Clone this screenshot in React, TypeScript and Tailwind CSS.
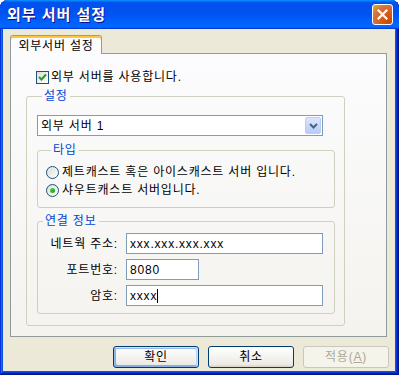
import React from "react";

type Props = { children?: React.ReactNode; className?: string };

const Legend: React.FC<{ text: string }> = ({ text }) => (
  <legend className="ml-[5px] px-[2px] leading-[12px] text-[#0046d5]">{text}</legend>
);

const Checkbox: React.FC = () => (
  <div className="w-[13px] h-[13px] border border-[#1c5180] bg-[linear-gradient(135deg,#dcdcd7,#ffffff)] flex items-center justify-center">
    <svg width="9" height="9" viewBox="0 0 9 9">
      <path d="M1 4 L3.5 6.5 L8 1.5" fill="none" stroke="#21a121" strokeWidth="2" />
    </svg>
  </div>
);

const Radio: React.FC<{ checked?: boolean }> = ({ checked }) => (
  <div className="w-[13px] h-[13px] rounded-full border border-[#1c5180] bg-[linear-gradient(135deg,#dcdcd7,#ffffff)] flex items-center justify-center">
    {checked && <div className="w-[5px] h-[5px] rounded-full bg-[linear-gradient(135deg,#55d551,#09a409)]" />}
  </div>
);

const Field: React.FC<Props & { width: string }> = ({ children, width }) => (
  <div className={`${width} h-[21px] border border-[#7f9db9] bg-white flex items-center pl-[3px] leading-[14px]`}>
    {children}
  </div>
);

const Button: React.FC<Props & { primary?: boolean; disabled?: boolean }> = ({ children, primary, disabled }) => {
  if (disabled) {
    return (
      <div className="w-[86px] h-[22px] rounded-[3px] border border-[#cac8bb] bg-[#f5f4ea] text-[#aca899] flex items-center justify-center">
        {children}
      </div>
    );
  }
  return (
    <div
      className={`w-[86px] h-[22px] rounded-[3px] border border-[#003c74] bg-[linear-gradient(180deg,#ffffff,#ecebe5_86%,#d8d0c4)] flex items-center justify-center ${
        primary
          ? "shadow-[inset_-1px_1px_#cee7ff,inset_1px_2px_#98b8ea,inset_-2px_2px_#bcd4f6,inset_1px_-1px_#89ade4,inset_2px_-2px_#89ade4]"
          : ""
      }`}
    >
      {children}
    </div>
  );
};

export default function App() {
  return (
    <div className="w-[399px] h-[375px] flex flex-col rounded-t-[8px] overflow-hidden bg-[#0855dd] shadow-[inset_-1px_-1px_#00138c,inset_1px_1px_#0831d9,inset_-2px_-2px_#001ea0,inset_2px_2px_#166aee,inset_-3px_-3px_#003bda,inset_3px_3px_#0855dd] font-['Liberation_Sans','Noto_Sans_CJK_KR',sans-serif] text-[12px] tracking-[0.8px] text-black">
      {/* title bar */}
      <div className="h-[29px] shrink-0 flex items-center justify-between pl-[7px] pr-[6px] bg-[linear-gradient(180deg,#0997ff,#0053ee_8%,#0050ee_40%,#0066ff_88%,#0066ff_93%,#005bff_95%,#003dd7_96%,#003dd7)]">
        <span className="text-white font-bold text-[15px] tracking-[1px] leading-[18px] [text-shadow:1px_1px_#0f1089]">
          외부 서버 설정
        </span>
        <div className="w-[21px] h-[21px] rounded-[3px] border border-white bg-[radial-gradient(circle_at_90%_90%,#cc4600,#dc6527_55%,#cd7546_70%,#e5a01a_90%)] flex items-center justify-center">
          <svg width="11" height="11" viewBox="0 0 11 11">
            <path d="M1.5 1.5 L9.5 9.5 M9.5 1.5 L1.5 9.5" stroke="white" strokeWidth="2.2" strokeLinecap="square" />
          </svg>
        </div>
      </div>

      {/* body */}
      <div className="flex-1 ml-[3px] mr-[4px] mb-[4px] bg-[#ece9d8] flex flex-col pt-[6px] pl-[7px] pr-[8px] pb-[3px]">
        <div className="flex">
          <div className="relative z-10 -mb-[1px] w-[92px] h-[19px] rounded-t-[3px] border-x border-t border-x-[#919b9c] border-t-[#e68b2c] bg-[#fcfcfe] shadow-[inset_0_2px_#ffc83c] flex items-center justify-center pt-[2px] leading-[12px]">
            외부서버 설정
          </div>
        </div>

        <div className="h-[284px] border border-[#919b9c] bg-[linear-gradient(180deg,#fcfcfe,#f4f3ee)] pt-[17px] pl-[15px]">
          <div className="flex items-center h-[13px] ml-[10px] gap-[2px] leading-[13px]">
            <Checkbox />
            <span>외부 서버를 사용합니다.</span>
          </div>

          <fieldset className="mt-[6px] w-[319px] border border-[#d0d0bf] rounded-[3px] pl-[10px] pr-[9px] pt-[13px] pb-[11px]">
            <Legend text="설정" />
            <div className="w-[286px] h-[21px] border border-[#7f9db9] bg-white flex items-center justify-between pl-[3px] pr-[1px] leading-[14px]">
              <span>외부 서버 1</span>
              <div className="w-[16px] h-[17px] rounded-[2px] border border-[#bacefa] bg-[linear-gradient(180deg,#dbe6fd,#b7cbfa)] flex items-center justify-center">
                <svg width="9" height="6" viewBox="0 0 9 6">
                  <path d="M1 1 L4.5 4.5 L8 1" fill="none" stroke="#4d6185" strokeWidth="2" />
                </svg>
              </div>
            </div>

            <fieldset className="mt-[8px] w-[298px] border border-[#d0d0bf] rounded-[3px] pl-[8px] pt-[10px] pb-[10px] flex flex-col gap-[5px]">
              <Legend text="타입" />
              <div className="flex items-center h-[13px] gap-[3px] leading-[13px]">
                <Radio />
                <span>제트캐스트 혹은 아이스캐스트 서버 입니다.</span>
              </div>
              <div className="flex items-center h-[13px] gap-[3px] leading-[13px]">
                <Radio checked />
                <span>샤우트캐스트 서버입니다.</span>
              </div>
            </fieldset>

            <fieldset className="mt-[7px] w-[298px] border border-[#d0d0bf] rounded-[3px] pt-[6px] pb-[7px] flex flex-col gap-[5px]">
              <Legend text="연결 정보" />
              <div className="flex items-center">
                <span className="w-[80px] text-right leading-[14px]">네트웍 주소:</span>
                <div className="ml-[8px]">
                  <Field width="w-[197px]">xxx.xxx.xxx.xxx</Field>
                </div>
              </div>
              <div className="flex items-center">
                <span className="w-[80px] text-right leading-[14px]">포트번호:</span>
                <div className="ml-[8px]">
                  <Field width="w-[73px]">8080</Field>
                </div>
              </div>
              <div className="flex items-center">
                <span className="w-[80px] text-right leading-[14px]">암호:</span>
                <div className="ml-[8px]">
                  <Field width="w-[197px]">
                    xxxx<span className="inline-block w-[1px] h-[14px] bg-black" />
                  </Field>
                </div>
              </div>
            </fieldset>
          </fieldset>
        </div>

        <div className="flex justify-end gap-[9px] mt-[9px] -mr-[2px]">
          <Button primary>확인</Button>
          <Button>취소</Button>
          <Button disabled>
            적용(<span className="underline">A</span>)
          </Button>
        </div>
      </div>
    </div>
  );
}
